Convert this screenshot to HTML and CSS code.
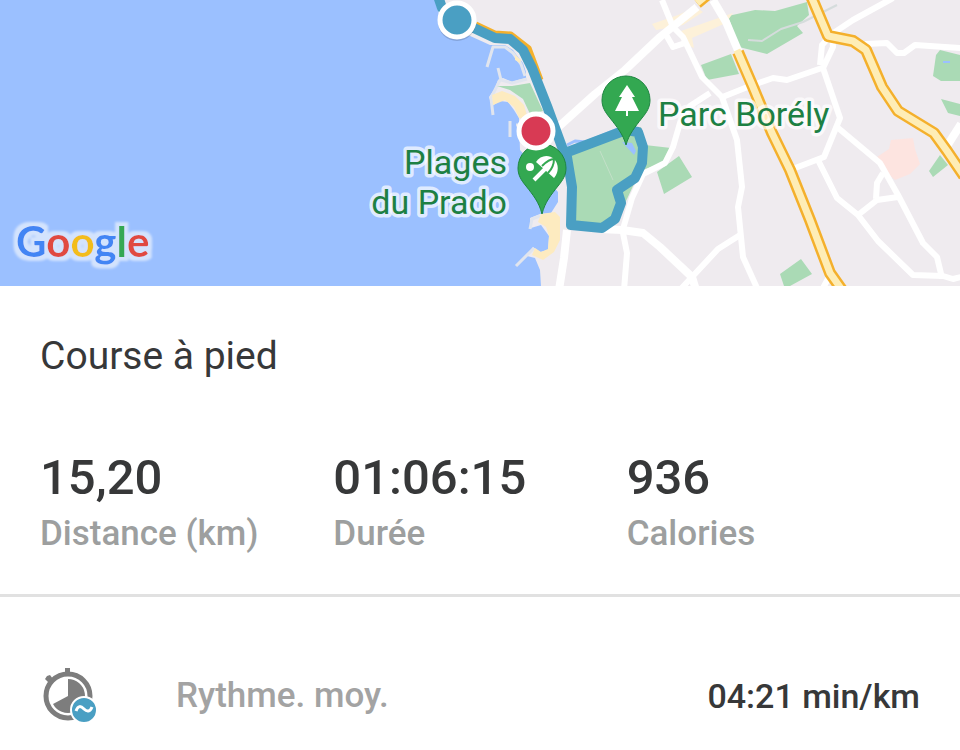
FILE: index.html
```html
<!DOCTYPE html>
<html lang="fr">
<head>
    <meta charset="UTF-8">
    <meta name="viewport" content="width=device-width, initial-scale=1.0">
    <title>Course à pied</title>
    <link rel="stylesheet" href="styles.css">
</head>
<body>

    <svg class="map" viewBox="0 0 960 286" role="img" aria-label="Parcours">
        <defs>
            <filter id="halo" x="-10%" y="-20%" width="120%" height="140%">
                <feMorphology in="SourceAlpha" operator="dilate" radius="4" result="grown"/>
                <feGaussianBlur in="grown" stdDeviation="1" result="soft"/>
                <feFlood flood-color="#d3e3fd"/>
                <feComposite in2="soft" operator="in" result="ring"/>
                <feMerge>
                    <feMergeNode in="ring"/>
                    <feMergeNode in="SourceGraphic"/>
                </feMerge>
            </filter>
        </defs>

        <rect class="water" width="960" height="286"/>
        <path class="land" d="M435 0 L439 14 L457 30 L490 45 L505 45 L513 50 L518 57 L523 63 L526 72 L526 78 L518 80 L512 82 L503 78 L498 80 L495 88 L489 97 L492 106 L500 101 L508 102 L514 110 L519 118 L520 150 L558 192 L558 202 L551 213 L540 214 L530 218 L531 228 L541 225 L549 236 L548 250 L540 252 L533 247 L527 256 L535 258 L540 270 L541 286 H960 V0 Z"/>
        <path class="jetty" d="M487 67 L493 47 L505 47 L513 53 L521 64 L525 76 M498 68 L501 80 L512 83 L527 79 M500 80 L491 98 L493 115 M510 121 V137 M516 125 H520 M540 216 L532 219 L530 229 M534 248 L516 266"/>

        <!-- parks and beaches -->
        <path class="park" d="M497 86 L512 86 L530 83 L543 111 L530 114 L523 99 L510 90 Z"/>
        <path class="sand" d="M492 95 L502 91 L515 96 L524 105 L528 119 L519 118 L514 107 L505 100 L493 105 Z M515 55 L521 60 L520 63 L515 60 Z M541 214 L555 212 L560 217 L560 240 L554 252 L543 260 L532 255 L535 248 L541 252 L548 249 L549 236 L546 227 L538 222 Z"/>
        <path class="park" d="M567 156 L627 132 L641 127 L645 145 L671 148 L665 162 L640 171 L627 199 L619 214 L603 227 L572 225 Z"/>
        <path class="park" d="M657 172 L679 156 L692 177 L664 194 Z M657 148 L668 148 L664 163 L640 169 Z"/>
        <path class="park" d="M728 16 L755 10 L775 11 L807 2 L809 15 L797 26 L803 33 L767 54 L739 47 Z M701 65 L731 54 L739 74 L707 80 Z M780 274 L801 259 L812 274 L790 286 L784 286 Z M940 50 L960 55 V81 H941 L933 76 L936 55 Z M941 99 L960 104 V116 L948 113 Z M929 171 L940 155 L948 165 L933 177 Z"/>
        <path class="trail" d="M748 40 L762 41 L781 29 L803 22 L837 5"/>
        <path class="footpath" d="M600 151 L613 180"/>
        <path class="pond" d="M943 61 L950 61 V63 H943 Z M622 142 L632 143 L636 151 L634 155 Z"/>
        <path class="creek" d="M567 145 L575 141 L586 142 L618 129"/>
        <path class="urban" d="M652 24 L678 15 L696 7 L703 12 L683 25 L656 30 Z M681 31 L733 13 L726 23 L692 38 L694 48 L685 44 Z"/>
        <path class="hospital" d="M877 157 L889 149 L891 140 L913 138 L915 149 L920 164 L910 174 L895 180 L885 171 Z"/>

        <!-- small roads -->
        <g class="road">
            <path class="road-wide" d="M555 130 L595 94 L625 70 L660 37 L697 7"/>
            <path d="M662 0 L673 27 L683 37 L702 77 L722 97 L737 140 L742 187 L738 207 L743 257 L757 288"/>
            <path d="M665 33 L673 47 L688 42"/>
            <path class="road-wide" d="M713 0 L726 22 L740 55"/>
            <path d="M720 98 L750 86 L773 78 L787 80 L822 68"/>
            <path d="M820 65 L822 45 L832 34 L833 47 L823 68 L840 118 L824 157 L790 170"/>
            <path d="M837 127 L880 163 L898 195 L923 243 L937 257 L942 278"/>
            <path d="M818 160 L837 198 L858 215 L878 241 L913 275 L943 276 L953 279 L961 277"/>
            <path d="M858 215 L877 200 L898 197 M876 199 L877 183 L883 173"/>
            <path d="M832 34 L853 20 L893 -2"/>
            <path d="M865 44 L887 43 L897 53 L904 53 L915 45 L961 48"/>
            <path class="road-wide" d="M947 146 L961 124"/>
            <path d="M710 93 L690 106 L680 123 L673 147 L665 163 L643 174 L632 198 L623 229"/>
            <path class="road-wide" d="M600 229 L622 230 L643 233 L660 247 L692 277 L696 290"/>
            <path d="M680 290 L692 277 L718 249 L740 235 M823 288 L829 277"/>
            <path class="road-wide" d="M567 230 L564 258 L559 290"/>
            <path d="M623 233 L627 253 L624 290"/>
        </g>

        <!-- main roads -->
        <g class="highway-casing">
            <path d="M738 52 L753 87 L772 133 L790 170 L810 220 L830 273 L842 290"/>
            <path d="M811 -4 L828 36 L853 41 L866 50 L882 87 L898 111 L934 133 L947 151 L964 176"/>
            <path class="coast-casing" d="M476 24 L495 33 L511 34 L529 48 L541 80"/>
            <path d="M697 3 L708 -6"/>
        </g>
        <g class="highway">
            <path d="M737 50 L753 87 L772 133 L790 170 L810 220 L830 273 L842 290"/>
            <path d="M811 -4 L828 36 L853 41 L866 50 L882 87 L898 111 L934 133 L947 151 L964 176"/>
            <path d="M697 3 L708 -6"/>
        </g>

        <path class="route" d="M438 -4 L442 8 L457 20 L478 30 L495 38 L510 39 L523 50 L532 68 L547 106 L562 147 L567 157 L572 187 L571 225 L602 228 L615 219 L621 203 L617 190 L635 178 L642 163 L643 147 L638 132 L626 130 L565 153"/>

        <!-- place pins -->
        <g transform="translate(626 100)">
            <path class="pin-body" d="M0 45 C-3 34 -9 27 -16 18 C-21 12 -24 7 -24 0 A24 24 0 0 1 24 0 C24 7 21 12 16 18 C9 27 3 34 0 45 Z"/>
            <path class="pin-glyph" d="M1 -15 L9 -3 H6 L13 11 H2 V16 H0 V11 H-11 L-4 -3 H-7 Z"/>
        </g>
        <g transform="translate(542 168)">
            <path class="pin-body" d="M0 46 C-3 34 -9 27 -16 18 C-21 12 -24 7 -24 0 A24 24 0 0 1 24 0 C24 7 21 12 16 18 C9 27 3 34 0 46 Z"/>
            <circle class="pin-glyph" cx="-12" cy="-1" r="4"/>
            <path class="pin-glyph" d="M-6 -6 C-2 -13 7 -14 12 -9 C17 -4 17 4 12 10 Z"/>
            <path class="pin-rib" d="M0 -2 C4 -6 8 -9 12 -9 C12 -4 10 1 6 5"/>
            <path class="pin-pole" d="M4 0 L-8 12"/>
        </g>

        <circle class="marker-shadow" cx="457" cy="22" r="19"/>
        <circle class="marker marker-start" cx="457" cy="20" r="17"/>
        <circle class="marker marker-end" cx="536" cy="131" r="17"/>

        <text class="place place-left" x="507" y="174">Plages</text>
        <text class="place place-left" x="507" y="214">du Prado</text>
        <text class="place" x="658" y="126">Parc Borély</text>

        <text class="google" x="16" y="257" filter="url(#halo)"><tspan class="g-blue">G</tspan><tspan class="g-red">o</tspan><tspan class="g-yellow">o</tspan><tspan class="g-blue">g</tspan><tspan class="g-green">l</tspan><tspan class="g-red">e</tspan></text>
    </svg>

    <div class="summary">
        <h1>Course à pied</h1>
        <div class="stats">
            <div class="stat">
                <div class="stat-value">15,20</div>
                <div class="stat-label">Distance (km)</div>
            </div>
            <div class="stat">
                <div class="stat-value">01:06:15</div>
                <div class="stat-label">Durée</div>
            </div>
            <div class="stat">
                <div class="stat-value">936</div>
                <div class="stat-label">Calories</div>
            </div>
        </div>
    </div>

    <div class="detail-row">
        <svg class="detail-icon" viewBox="0 0 56 58" aria-hidden="true">
            <path class="watch" d="M22 1 H27 V7 H22 Z M2 12 L4 9 L7 8 L10 12 L6 16 Z"/>
            <circle class="watch-ring" cx="25" cy="29" r="22"/>
            <path class="watch" d="M25 29 V12 A17 17 0 1 1 10 37 Z"/>
            <circle class="badge" cx="41" cy="43" r="13"/>
            <path class="badge-wave" d="M33 44 C35 38 38 39 41 42 C44 45 47 45 49 40"/>
        </svg>
        <span class="detail-label">Rythme. moy.</span>
        <span class="detail-value">04:21 min/km</span>
    </div>

</body>
</html>
```

FILE: styles.css
```css
body {
    margin: 0;
    font-family: Roboto, sans-serif;
    background-color: #fff;
    color: #373839;
}

/* map */
.map {
    display: block;
    width: 100%;
}
.map path {
    stroke-linejoin: round;
}
.water { fill: #9bc0ff; }
.land { fill: #efebef; }
.park { fill: #aadab5; }
.sand { fill: #fdebc0; }
.pond { fill: #9bc0ff; }
.urban { fill: #fdf1d9; }
.hospital { fill: #fde4e0; }
.jetty { fill: none; stroke: #e1e5ee; stroke-width: 3; }
.trail { fill: none; stroke: #d5dcdc; stroke-width: 2; }
.footpath { fill: none; stroke: #c3e0c8; stroke-width: 1; }
.creek { fill: none; stroke: #9bc0ff; stroke-width: 3; }
.road {
    fill: none;
    stroke: #fff;
    stroke-width: 6;
}
.road-wide { stroke-width: 8; }
.highway-casing {
    fill: none;
    stroke: #f4b02c;
    stroke-width: 12;
}
.coast-casing { stroke-width: 5; }
.highway {
    fill: none;
    stroke: #feedb6;
    stroke-width: 7;
}
.route {
    fill: none;
    stroke: #4a9fc3;
    stroke-width: 10;
}
.pin-body { fill: #33a851; stroke: #1e8641; stroke-width: 1; }
.pin-glyph { fill: #fff; }
.pin-rib { fill: none; stroke: #33a851; stroke-width: 2; }
.pin-pole { stroke: #fff; stroke-width: 4; }
.marker { stroke: #fff; stroke-width: 5; }
.marker-shadow { fill: #000; opacity: 0.15; }
.marker-start { fill: #4a9fc3; }
.marker-end { fill: #d83a54; }
.place {
    font-size: 34px;
    fill: #1d8043;
    stroke: #fff;
    stroke-opacity: 0.7;
    stroke-width: 7;
    stroke-linejoin: round;
    paint-order: stroke;
}
.place-left { text-anchor: end; }
.google {
    font-family: Lato, sans-serif;
    font-size: 42px;
    font-weight: 700;
}
.g-blue { fill: #4285f4; }
.g-red { fill: #e04a3f; }
.g-yellow { fill: #f2bd1d; }
.g-green { fill: #34a853; }

/* summary */
.summary {
    padding: 48px 40px 40px;
    border-bottom: 3px solid #e1e1e1;
}
h1 {
    margin: 0 0 72px;
    font-size: 39px;
    font-weight: 400;
    line-height: 44px;
}
.stats {
    display: grid;
    grid-template-columns: repeat(3, 1fr);
}
.stat-value {
    margin-bottom: 8px;
    font-size: 49px;
    font-weight: 500;
    line-height: 56px;
}
.stat-label,
.detail-label {
    color: #9d9f9f;
    font-size: 35px;
    font-weight: 500;
    line-height: 40px;
}
.detail-label {
    color: #a3a3a3;
}

/* detail row */
.detail-row {
    display: flex;
    align-items: center;
    padding: 70px 40px 24px 43px;
}
.detail-icon {
    width: 56px;
    margin-right: 77px;
}
.watch { fill: #7d7d7d; }
.watch-ring { fill: none; stroke: #7d7d7d; stroke-width: 5; }
.badge { fill: #4a9fc3; stroke: #fff; stroke-width: 2; }
.badge-wave { fill: none; stroke: #fff; stroke-width: 3; }
.detail-value {
    margin-left: auto;
    font-size: 34px;
    font-weight: 500;
    line-height: 40px;
}
```
